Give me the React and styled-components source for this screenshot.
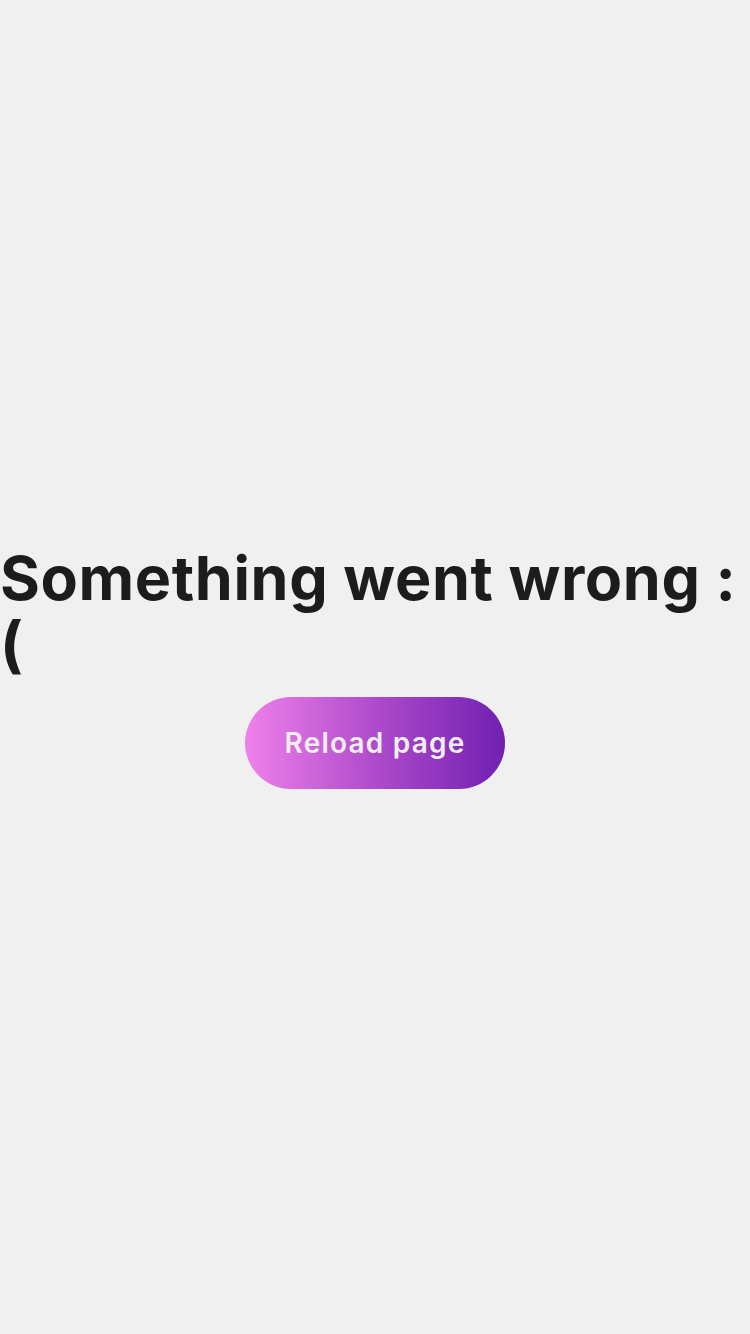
import styled, { createGlobalStyle } from "styled-components"

const GlobalStyle = createGlobalStyle`
  html, body {
    margin: 0;
    padding: 0;
    background: #f0f0f0;
  }
  body {
    font-family: Inter, "Noto Sans", sans-serif;
  }
`

export default function App() {
  return (
    <>
      <GlobalStyle />
      <ErrorPage>
        <Title>Something went wrong : (</Title>
        <ReloadButton type="button" onClick={() => window.location.reload()}>
          Reload page
        </ReloadButton>
      </ErrorPage>
    </>
  )
}

const ErrorPage = styled.div`
  min-height: 100vh;
  display: flex;
  flex-direction: column;
  justify-content: center;
  align-items: center;
  gap: 20px;
`

const Title = styled.h1`
  align-self: stretch;
  margin: 0;
  font-size: 61px;
  line-height: 66px;
  font-weight: 700;
  color: #1c1c1c;
  letter-spacing: 0.6px;
`

const ReloadButton = styled.button`
  height: 92px;
  padding: 0 40px;
  border: none;
  border-radius: 46px;
  background: linear-gradient(90deg, #ef80ea 0%, #a846c8 55%, #7020b2 100%);
  color: #f1eef2;
  font-family: Inter, "Noto Sans", sans-serif;
  font-size: 28px;
  font-weight: 600;
  letter-spacing: 1.2px;
  cursor: pointer;
`
